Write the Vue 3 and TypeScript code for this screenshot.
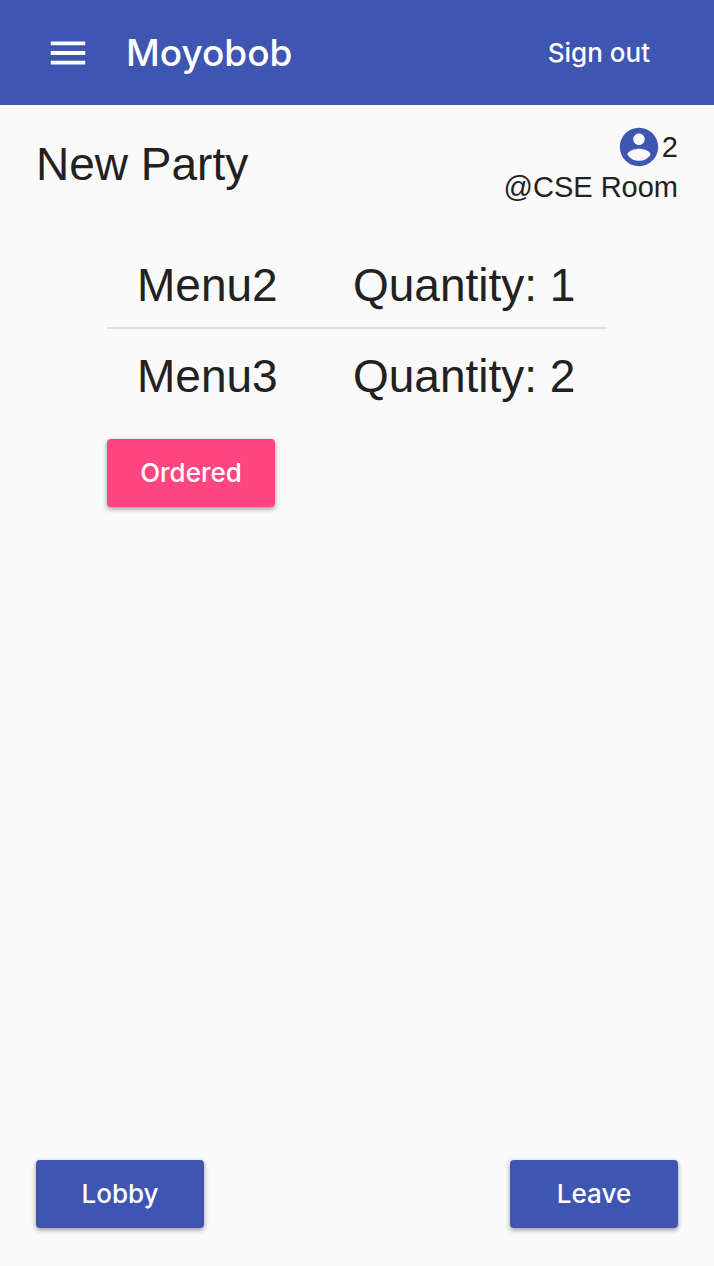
<script setup lang="ts">
interface MenuEntry {
  name: string
  quantity: number
}

const party = { name: 'New Party', members: 2, location: 'CSE Room' }

const entries: MenuEntry[] = [
  { name: 'Menu2', quantity: 1 },
  { name: 'Menu3', quantity: 2 },
]
</script>

<template>
  <div class="page">
    <header class="app-bar">
      <button class="icon-button" type="button" aria-label="Open navigation">
        <svg class="icon" viewBox="0 0 24 24" aria-hidden="true">
          <path d="M3 18h18v-2H3v2zm0-5h18v-2H3v2zm0-7v2h18V6H3z" />
        </svg>
      </button>
      <h1 class="brand">Moyobob</h1>
      <button class="sign-out" type="button">Sign out</button>
    </header>

    <main class="content">
      <section class="party-header">
        <h2 class="party-name">{{ party.name }}</h2>
        <div class="party-info">
          <div class="members">
            <svg class="icon" viewBox="0 0 24 24" aria-hidden="true">
              <path
                d="M12 2C6.48 2 2 6.48 2 12s4.48 10 10 10 10-4.48 10-10S17.52 2 12 2zm0 3c1.66 0 3 1.34 3 3s-1.34 3-3 3-3-1.34-3-3 1.34-3 3-3zm0 14.2c-2.5 0-4.71-1.28-6-3.22.03-1.99 4-3.08 6-3.08 1.99 0 5.97 1.09 6 3.08-1.29 1.94-3.5 3.22-6 3.22z"
              />
            </svg>
            <span>{{ party.members }}</span>
          </div>
          <div class="location">@{{ party.location }}</div>
        </div>
      </section>

      <section class="order">
        <ul class="menu-list">
          <li v-for="entry in entries" :key="entry.name" class="menu-row">
            <span>{{ entry.name }}</span>
            <span class="quantity">Quantity: {{ entry.quantity }}</span>
          </li>
        </ul>
        <button class="button accent" type="button">Ordered</button>
      </section>
    </main>

    <footer class="actions">
      <button class="button" type="button">Lobby</button>
      <button class="button" type="button">Leave</button>
    </footer>
  </div>
</template>

<style>
body {
  margin: 0;
  background: #fafafa;
}
</style>

<style scoped>
.page {
  display: flex;
  flex-direction: column;
  min-height: 100vh;
  box-sizing: border-box;
  background: #fafafa;
  color: #212121;
  font-family: "Liberation Sans", Arial, sans-serif;
}

button {
  border: 0;
  font-family: Inter, "Liberation Sans", sans-serif;
  font-size: 26px;
  line-height: 32px;
  font-weight: 500;
  cursor: pointer;
}

.app-bar {
  display: flex;
  align-items: center;
  height: 105px;
  padding: 0 64px 0 45px;
  background: #3f55b2;
  color: #fff;
}

.icon {
  display: block;
  width: 46px;
  height: 46px;
  fill: currentColor;
}

.icon-button {
  padding: 0;
  background: none;
  color: inherit;
}

.brand {
  flex: 1;
  margin: 0 0 0 35px;
  font-family: Inter, "Liberation Sans", sans-serif;
  font-size: 37px;
  line-height: 48px;
  font-weight: 500;
}

.sign-out {
  padding: 0;
  background: none;
  color: inherit;
}

.content {
  flex: 1;
}

.party-header {
  display: flex;
  justify-content: space-between;
  align-items: center;
  padding: 19px 36px 0;
}

.party-name {
  margin: 0;
  font-size: 46px;
  line-height: 60px;
  font-weight: 400;
}

.party-info {
  font-size: 29px;
  line-height: 34px;
}

.members {
  display: flex;
  justify-content: flex-end;
  align-items: center;
}

.members .icon {
  color: #3f55b2;
}

.order {
  width: 500px;
  max-width: 100%;
  margin: 34px auto 0;
}

.menu-list {
  margin: 0 0 21px;
  padding: 0;
  list-style: none;
}

.menu-row {
  display: flex;
  justify-content: space-between;
  padding: 17px 30px 12px;
  font-size: 46px;
  line-height: 60px;
}

.menu-row + .menu-row {
  border-top: 2px solid #e0e0e0;
}

.quantity {
  min-width: 224px;
}

.button {
  min-width: 168px;
  padding: 18px 30px;
  border-radius: 4px;
  background: #3f55b2;
  color: #fff;
  box-shadow: 0 2px 5px rgba(0, 0, 0, 0.4);
}

.accent {
  background: #ff4582;
}

.actions {
  display: flex;
  justify-content: space-between;
  padding: 36px 36px 38px;
}
</style>
